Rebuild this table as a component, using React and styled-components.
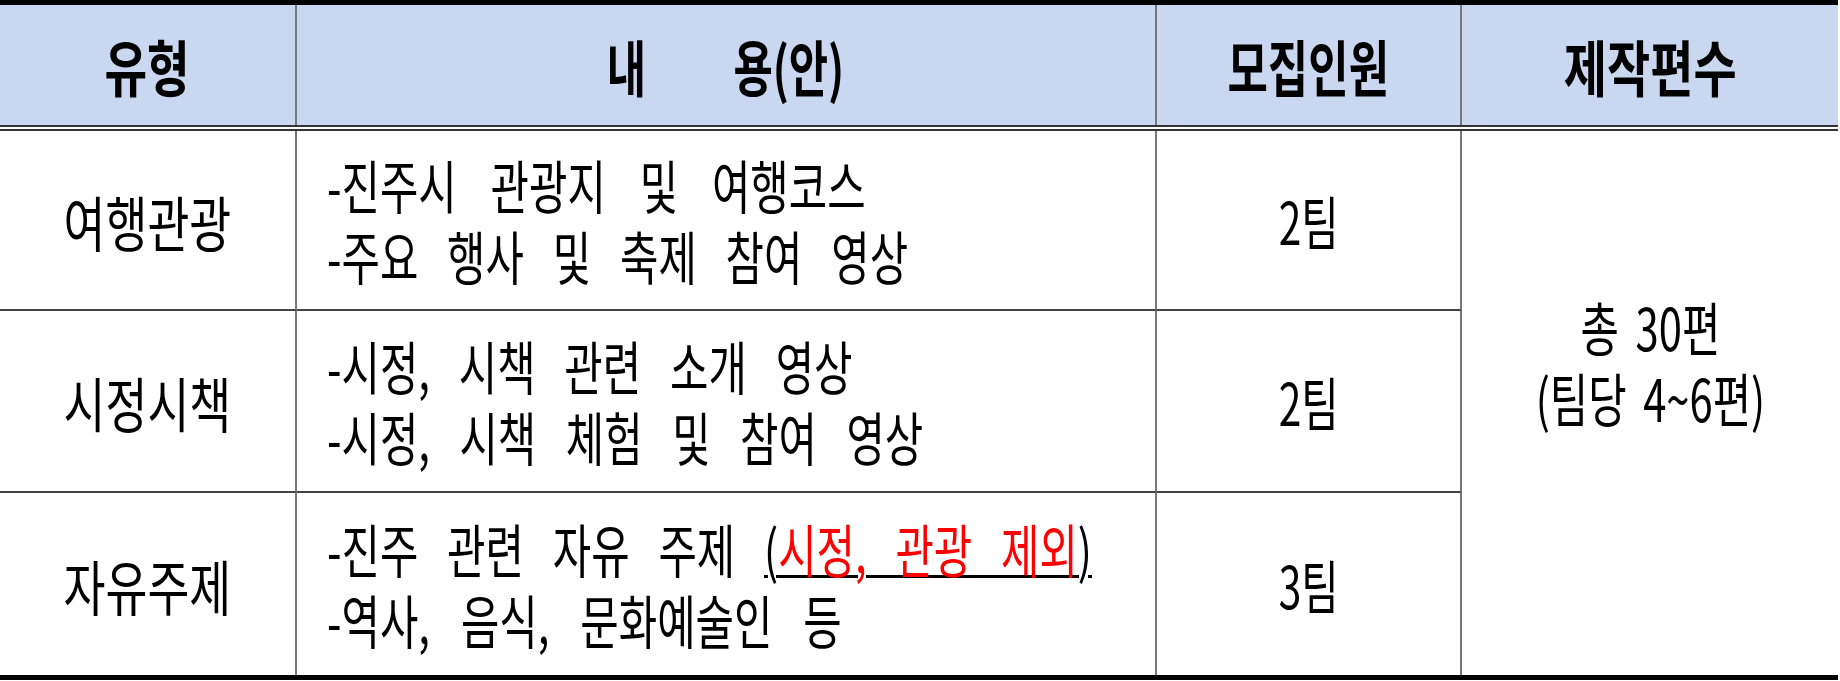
import React from 'react';
import styled, { createGlobalStyle } from 'styled-components';

const GlobalStyle = createGlobalStyle`
  html, body {
    margin: 0;
    padding: 0;
    background: #fff;
  }
  body {
    font-family: "Noto Sans CJK KR", "Noto Sans", sans-serif;
    color: #000;
  }
`;

const COLS = '297px 860px 305px 376px';

const Table = styled.div`
  width: 1838px;
  border-top: 5px solid #000;
  border-bottom: 5px solid #000;
`;

const HeadRow = styled.div`
  display: grid;
  grid-template-columns: ${COLS};
  height: 126px;
  box-sizing: border-box;
  background: #c9d8f0;
  background-clip: padding-box;
  border-bottom: 6px double #333;
`;

const HeadCell = styled.div`
  display: flex;
  align-items: center;
  justify-content: center;
  box-sizing: border-box;
  border-right: ${p => (p.$end ? 'none' : '2px solid #777')};
  font-size: 61px;
  font-weight: 700;
  white-space: pre;
`;

const Body = styled.div`
  display: grid;
  grid-template-columns: ${COLS};
  grid-template-rows: 180px 182px 182px;
`;

const Cell = styled.div`
  display: flex;
  align-items: center;
  justify-content: ${p => (p.$left ? 'flex-start' : 'center')};
  padding-left: ${p => (p.$left ? '30px' : '0')};
  box-sizing: border-box;
  border-right: 2px solid #777;
  border-bottom: ${p => (p.$last ? 'none' : '2px solid #444')};
  font-size: ${p => p.$size || 58}px;
  white-space: pre;
`;

const TotalCell = styled.div`
  grid-column: 4;
  grid-row: 1 / span 3;
  display: flex;
  align-items: center;
  justify-content: center;
  padding-bottom: 82px;
  font-size: 58px;
  white-space: pre;
`;

const Squeeze = styled.span`
  display: inline-block;
  transform: scaleX(${p => p.$x});
  transform-origin: ${p => p.$origin || 'center'} center;
`;

const Lines = styled.div`
  line-height: 71px;
  text-align: ${p => p.$align || 'left'};
  word-spacing: ${p => p.$ws || '0px'};
`;

const Line = styled.div`
  word-spacing: ${p => p.$ws}px;
`;

const Note = styled.span`
  text-decoration: underline;
  text-decoration-color: #000;
  text-decoration-thickness: 3px;
  text-underline-offset: 2px;
`;

const Red = styled.span`
  color: #ff0000;
`;

const rows = [
  {
    type: '여행관광',
    lines: [
      { text: '-진주시 관광지 및 여행코스', ws: 34 },
      { text: '-주요 행사 및 축제 참여 영상', ws: 27 },
    ],
    count: '2팀',
  },
  {
    type: '시정시책',
    lines: [
      { text: '-시정, 시책 관련 소개 영상', ws: 27 },
      { text: '-시정, 시책 체험 및 참여 영상', ws: 28 },
    ],
    count: '2팀',
  },
  {
    type: '자유주제',
    lines: [
      {
        text: (
          <>
            -진주 관련 자유 주제 <Note>(<Red>시정, 관광 제외</Red>)</Note>
          </>
        ),
        ws: 27,
      },
      { text: '-역사, 음식, 문화예술인 등', ws: 30 },
    ],
    count: '3팀',
  },
];

export default function App() {
  return (
    <>
      <GlobalStyle />
      <Table>
        <HeadRow>
          <HeadCell><Squeeze $x={0.76}>유형</Squeeze></HeadCell>
          <HeadCell><Squeeze $x={0.7}>{'내         용(안)'}</Squeeze></HeadCell>
          <HeadCell><Squeeze $x={0.72}>모집인원</Squeeze></HeadCell>
          <HeadCell $end><Squeeze $x={0.77}>제작편수</Squeeze></HeadCell>
        </HeadRow>
        <Body>
          <TotalCell>
            <Squeeze $x={0.72}>
              <Lines $align="center" $ws="10px">
                <div>총 30편</div>
                <div>(팀당 4~6편)</div>
              </Lines>
            </Squeeze>
          </TotalCell>
          {rows.map((r, i) => {
            const last = i === rows.length - 1;
            return (
              <React.Fragment key={r.type}>
                <Cell $last={last} $size={60}><Squeeze $x={0.76}>{r.type}</Squeeze></Cell>
                <Cell $last={last} $left>
                  <Squeeze $x={0.72} $origin="left">
                    <Lines>
                      {r.lines.map((l, j) => <Line key={j} $ws={l.ws}>{l.text}</Line>)}
                    </Lines>
                  </Squeeze>
                </Cell>
                <Cell $last={last}><Squeeze $x={0.7}>{r.count}</Squeeze></Cell>
              </React.Fragment>
            );
          })}
        </Body>
      </Table>
    </>
  );
}
